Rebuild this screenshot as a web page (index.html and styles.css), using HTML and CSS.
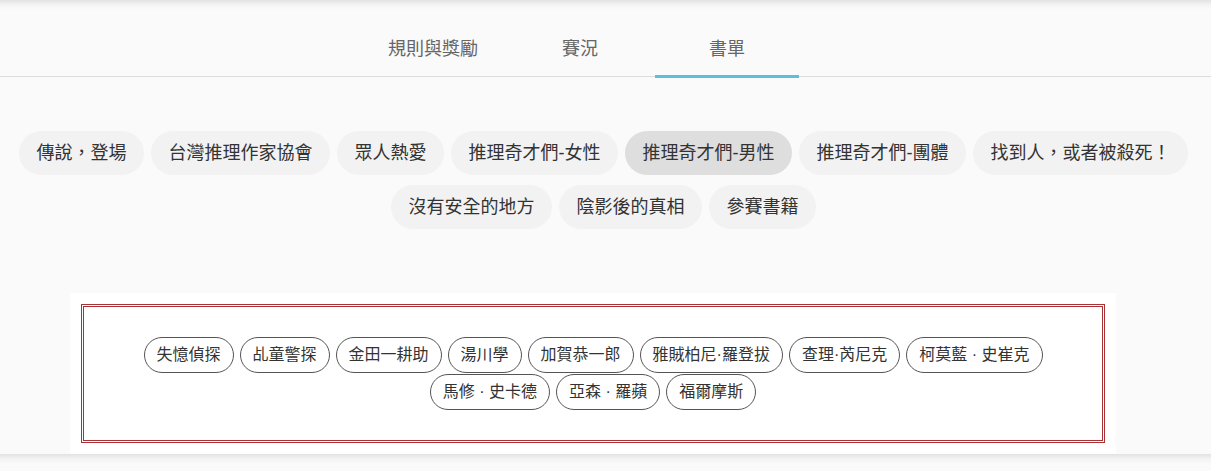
FILE: index.html
```html
<!DOCTYPE html>
<html lang="zh-Hant">
<head>
  <meta charset="UTF-8">
  <title>書單</title>
  <link rel="stylesheet" href="styles.css">
</head>
<body>
  <!-- Tabs -->
  <nav class="tabs">
    <a class="tab">規則與獎勵</a>
    <a class="tab">賽況</a>
    <a class="tab active">書單</a>
  </nav>

  <!-- Categories -->
  <div class="chips">
    <span class="chip">傳說，登場</span>
    <span class="chip">台灣推理作家協會</span>
    <span class="chip">眾人熱愛</span>
    <span class="chip">推理奇才們-女性</span>
    <span class="chip active">推理奇才們-男性</span>
    <span class="chip">推理奇才們-團體</span>
    <span class="chip">找到人，或者被殺死！</span>
    <span class="chip">沒有安全的地方</span>
    <span class="chip">陰影後的真相</span>
    <span class="chip">參賽書籍</span>
  </div>

  <!-- Detectives -->
  <div class="panel">
    <div class="frame">
      <div class="pills">
        <span class="pill">失憶偵探</span>
        <span class="pill">乩童警探</span>
        <span class="pill">金田一耕助</span>
        <span class="pill">湯川學</span>
        <span class="pill">加賀恭一郎</span>
        <span class="pill">雅賊柏尼·羅登拔</span>
        <span class="pill">查理·芮尼克</span>
        <span class="pill">柯莫藍 · 史崔克</span>
        <span class="pill">馬修 · 史卡德</span>
        <span class="pill">亞森 · 羅蘋</span>
        <span class="pill">福爾摩斯</span>
      </div>
    </div>
  </div>
</body>
</html>
```

FILE: styles.css
```css
body {
  margin: 0;
  overflow: hidden;
  background: linear-gradient(to bottom, #e2e2e2 0, #f4f4f4 5px, #fafafa 10px, #fafafa);
  font-family: 'Liberation Sans', 'Noto Sans CJK TC', sans-serif;
  color: #333;
}
.tabs {
  display: flex;
  justify-content: center;
  gap: 3px;
  padding-right: 51px;
  border-bottom: 1px solid #ddd;
}
.tab {
  position: relative;
  width: 144px;
  padding: 36px 0 14px;
  line-height: 26px;
  font-size: 18px;
  text-align: center;
  color: #666;
  cursor: pointer;
}
.tab.active::after {
  content: '';
  position: absolute;
  left: 0;
  right: 0;
  bottom: -2px;
  height: 3px;
  background: #5bc0de;
}
.chips {
  display: flex;
  flex-wrap: wrap;
  justify-content: center;
  gap: 10px 7px;
  margin-top: 54px;
  padding: 0 18px 0 14px;
}
.chip {
  height: 44px;
  line-height: 44px;
  padding: 0 17.5px;
  border-radius: 22px;
  background: #f2f2f2;
  font-size: 18px;
  color: #333;
  cursor: pointer;
}
.chip.active {
  background: #dedede;
}
.panel {
  width: 1046px;
  margin: 64px 0 0 70px;
  padding: 11px;
  box-sizing: border-box;
  background: #fff;
}
.frame {
  border: 3px double #a83236;
  padding: 30px 0 30px;
}
.pills {
  display: flex;
  flex-wrap: wrap;
  justify-content: center;
  gap: 1px 6px;
  padding: 0 40px;
}
.pill {
  height: 34px;
  line-height: 34px;
  padding: 0 12px;
  border: 1px solid #555;
  border-radius: 18px;
  font-size: 16px;
  color: #333;
}
```
